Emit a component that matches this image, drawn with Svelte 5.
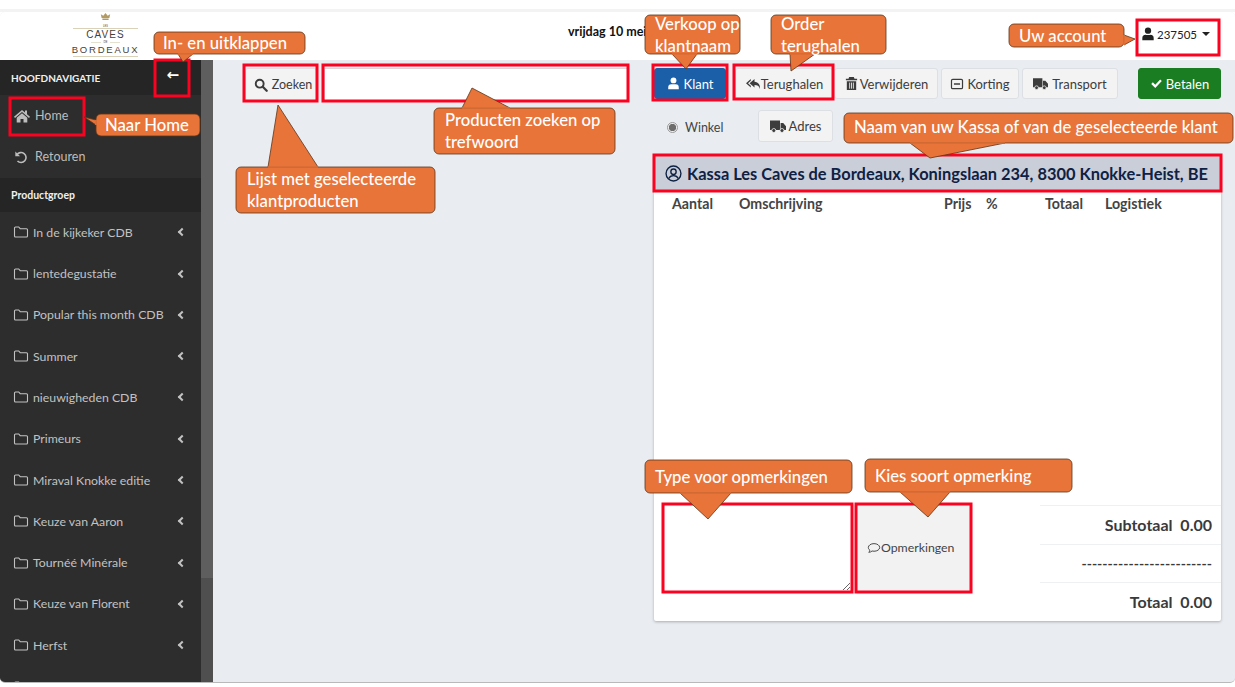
<script>
  const groups = ['In de kijkeker CDB','lentedegustatie','Popular this month CDB','Summer','nieuwigheden CDB','Primeurs','Miraval Knokke editie','Keuze van Aaron','Tournéé Minérale','Keuze van Florent','Herfst','BIO Selectie'];
  const boxes = [
    [155,60,34,36],[10,98,74,37],[244,65,73,36],[323,65,305,36],[653,65,74,35],[734,65,99,34],
    [1137,20,82,35],[654,155,567,36],[663,504,189,88],[856,504,115,88]
  ];
  const callouts = [
    { x:154,y:32,w:151,h:22, tail:'178,54 183,62 193,54', lines:[['In- en uitklappen',163,49]] },
    { x:96,y:114,w:104,h:22, tail:'96,120 84,117 96,125', lines:[['Naar Home',105,131]] },
    { x:236,y:167,w:199,h:46, tail:'268,167 278,105 318,167', lines:[['Lijst met geselecteerde',247,185],['klantproducten',247,207]] },
    { x:434,y:108,w:181,h:46, tail:'462,108 472,88 510,108', lines:[['Producten zoeken op',445,126],['trefwoord',445,148]] },
    { x:645,y:15,w:95,h:39, tail:'672,54 686,69 697,54', lines:[['Verkoop op',655,30],['klantnaam',655,52]] },
    { x:771,y:15,w:115,h:39, tail:'790,54 791,71 815,54', lines:[['Order',781,30],['terughalen',781,52]] },
    { x:1009,y:24,w:115,h:23, tail:'1124,35 1135,39 1124,45', lines:[['Uw account',1019,42]] },
    { x:844,y:113,w:389,h:30, tail:'910,143 930,158 1005,143', lines:[['Naam van uw Kassa of van de geselecteerde klant',854,133]] },
    { x:645,y:460,w:207,h:33, tail:'680,493 708,519 731,493', lines:[['Type voor opmerkingen',655,483]] },
    { x:865,y:459,w:207,h:33, tail:'900,492 928,517 950,492', lines:[['Kies soort opmerking',875,482]] }
  ];
  const actions = [
    { label:'Verwijderen', cls:'b-verw', icon:'trash' },
    { label:'Korting', cls:'b-kort', icon:'minus' },
    { label:'Transport', cls:'b-trans', icon:'truck' }
  ];
</script>

{#snippet icon(name, size)}
  <svg class="ico" width={size} height={size} viewBox="0 0 16 16" aria-hidden="true">
    {#if name === 'user'}
      <circle cx="8" cy="4.2" r="3.6" fill="currentColor"/><path d="M1.5 15v-1.8A4 4 0 0 1 5.5 9h5a4 4 0 0 1 4 4.2V15z" fill="currentColor"/>
    {:else if name === 'search'}
      <circle cx="6.5" cy="6.5" r="4.5" fill="none" stroke="currentColor" stroke-width="2.2"/><path d="M10 10l4.5 4.5" stroke="currentColor" stroke-width="2.6" stroke-linecap="round"/>
    {:else if name === 'trash'}
      <path d="M2 3h12v1.6H2zM5.5 1h5l.7 2h-6.4zM3 5.5h10V15H3z" fill="currentColor"/><path d="M6 7v6.5M8 7v6.5M10 7v6.5" stroke="#f4f4f4" stroke-width=".9"/>
    {:else if name === 'minus'}
      <rect x="1.7" y="2.7" width="12.6" height="10.6" rx="1.4" fill="none" stroke="currentColor" stroke-width="1.4"/><path d="M4.5 8h7" stroke="currentColor" stroke-width="1.6"/>
    {:else if name === 'truck'}
      <path d="M0 2.500h10v9.500H0zM10.600 5h2.600L16 8.200V12h-5.400z" fill="currentColor"/><circle cx="3.800" cy="12.500" r="2" fill="currentColor" stroke="#f4f4f4" stroke-width=".8"/><circle cx="12" cy="12.500" r="2" fill="currentColor" stroke="#f4f4f4" stroke-width=".8"/>
    {:else if name === 'reply'}
      <path d="M5.800 3L1 7.200l4.800 4.300V9.800L3 7.200l2.800-2.500z" fill="currentColor"/><path d="M9.500 3L4.600 7.200l4.900 4.300V9c3 0 4.500.9 5.500 4 .4-4-1.500-7-5.500-7.300z" fill="currentColor"/>
    {:else if name === 'check'}
      <path d="M1.500 8.500l2-2 3 3 6-6.500 2 2-8 8.500z" fill="currentColor"/>
    {:else if name === 'home'}
      <path d="M8 2L0 8.800l1 1.100L8 4l7 5.900 1-1.100-3-2.500V2.500h-2v2z" fill="currentColor"/><path d="M8 5.200l5.300 4.500V14.500H9.500V11h-3v3.500H2.700V9.700z" fill="currentColor"/>
    {:else if name === 'undo'}
      <path d="M3.300 5.500A5.700 5.700 0 1 1 4 12.600" fill="none" stroke="currentColor" stroke-width="1.800"/><path d="M1.500 1.800v5.400h5.400z" fill="currentColor"/>
    {:else if name === 'folder'}
      <path d="M1.500 4a1 1 0 0 1 1-1h3.200l1.500 1.700h6.300a1 1 0 0 1 1 1V12a1 1 0 0 1-1 1h-11a1 1 0 0 1-1-1z" fill="none" stroke="currentColor" stroke-width="1.100"/>
    {:else if name === 'comment'}
      <path d="M8 3c3.600 0 6.500 1.900 6.500 4.400S11.600 11.700 8 11.700c-.8 0-1.500-.1-2.200-.3-.9.900-2.200 1.500-3.800 1.500.7-.7 1.200-1.500 1.300-2.400-1.100-.8-1.800-1.800-1.800-3C1.500 4.900 4.400 3 8 3z" fill="none" stroke="currentColor" stroke-width="1.100"/>
    {:else if name === 'usercircle'}
      <circle cx="8" cy="8" r="7" fill="none" stroke="currentColor" stroke-width="1.300"/><circle cx="8" cy="6.300" r="2.500" fill="none" stroke="currentColor" stroke-width="1.300"/><path d="M3.600 12.800c.7-2 2.400-2.800 4.400-2.800s3.700.8 4.400 2.800" fill="none" stroke="currentColor" stroke-width="1.300"/>
    {/if}
  </svg>
{/snippet}

<div class="page">
  <div class="window">
    <header class="top">
      <div class="logo">
        <svg class="crown" width="11" height="7" viewBox="0 0 14 9"><path d="M2 6.500L1 1.500l3.200 2L7 0l2.800 3.500L13 1.500l-1 5zM3 7.200h8V9H3z" fill="#b29a63"/></svg>
        <div class="les">LES</div>
        <div class="rule"></div>
        <div class="caves">CAVES</div>
        <div class="de"><i></i><span>DE</span><i></i></div>
        <div class="bordeaux">BORDEAUX</div>
        <div class="rule end"></div>
      </div>
      <div class="date">vrijdag 10 mei 2024</div>
      <div class="account">
        {@render icon('user', 14)}<span>237505</span><span class="caret"></span>
      </div>
    </header>

    <div class="body">
      <aside class="side">
        <nav class="nav">
          <div class="nav-head"><span>HOOFDNAVIGATIE</span><span class="back">←</span></div>
          <div class="nav-item"><span class="nav-ico">{@render icon('home', 16)}</span><span>Home</span></div>
          <div class="nav-item"><span class="nav-ico">{@render icon('undo', 14)}</span><span>Retouren</span></div>
          <div class="nav-sub">Productgroep</div>
          {#each groups as g}
            <div class="grp">{@render icon('folder', 16)}<span class="grp-name">{g}</span><span class="chev"></span></div>
          {/each}
        </nav>
        <div class="scroll"><div class="thumb"></div></div>
      </aside>

      <main class="main">
        <section class="search">
          <button class="btn zoek">{@render icon('search', 14)}<span>Zoeken</span></button>
          <input class="term" type="text" />
        </section>

        <section class="order">
          <div class="toolbar">
            <button class="btn klant">{@render icon('user', 13)}<span>Klant</span></button>
            <button class="btn terug">{@render icon('reply', 16)}<span>Terughalen</span></button>
            {#each actions as a}
              <button class="btn {a.cls}">{@render icon(a.icon, a.icon === 'minus' ? 14 : 15)}<span>{a.label}</span></button>
            {/each}
            <button class="btn pay">{@render icon('check', 13)}<span>Betalen</span></button>
          </div>
          <div class="delivery">
            <label class="radio"><span class="dot"></span>Winkel</label>
            <button class="btn adres">{@render icon('truck', 16)}<span>Adres</span></button>
          </div>
          <div class="card">
            <div class="who">{@render icon('usercircle', 17)}<span>Kassa Les Caves de Bordeaux, Koningslaan 234, 8300 Knokke-Heist, BE</span></div>
            <div class="cols">
              <span class="c1">Aantal</span><span class="c2">Omschrijving</span><span class="c3">Prijs</span><span class="c4">%</span><span class="c5">Totaal</span><span class="c6">Logistiek</span>
            </div>
            <div class="lines"></div>
            <div class="foot">
              <textarea class="note"></textarea>
              <button class="kind">{@render icon('comment', 14)}<span>Opmerkingen</span></button>
              <div class="totals">
                <div class="row">Subtotaal&nbsp;&nbsp;0.00</div>
                <div class="row dashes">-------------------------</div>
                <div class="row">Totaal&nbsp;&nbsp;0.00</div>
              </div>
            </div>
          </div>
        </section>
      </main>
    </div>
  </div>

  <svg class="notes" width="1235" height="687" viewBox="0 0 1235 687">
    {#each callouts as c}
      <rect x={c.x} y={c.y} width={c.w} height={c.h} rx="5" fill="#e8743a" stroke="#5e3518" stroke-width=".8"/>
    {/each}
    {#each boxes as b}
      <rect x={b[0]} y={b[1]} width={b[2]} height={b[3]} fill="none" stroke="#fb0320" stroke-width="3"/>
    {/each}
    {#each callouts as c}
      <polygon points={c.tail} fill="#e8743a" stroke="#5e3518" stroke-width=".8"/>
      <polyline points="{c.tail.split(' ')[0]} {c.tail.split(' ')[2]}" stroke="#e8743a" stroke-width="1.6" fill="none"/>
      {#each c.lines as l}
        <text x={l[1]} y={l[2]} class="note-text">{l[0]}</text>
      {/each}
    {/each}
  </svg>
</div>

<style>
  :global(body) { margin: 0; background: #fff; }
  .page { position: relative; width: 1235px; height: 687px; overflow: hidden; font-family: "Lato", "Open Sans", sans-serif; font-size: 13px; color: #343a40; padding-top: 12px; box-sizing: border-box; }
  .page::before { content: ""; display: block; height: 3px; margin-top: -3px; background: #f3f3f3; }
  .window { height: 671px; display: flex; flex-direction: column; background: #e9edf2; border-bottom: 1px solid #b9b9b9; box-sizing: border-box; border-radius: 5px 5px 5px 5px; overflow: hidden; }
  .top { height: 48px; flex: none; background: #fff; display: flex; align-items: flex-start; position: relative; }
  .logo { width: 65px; margin-left: 73px; display: flex; flex-direction: column; align-items: center; color: #45423a; }
  .crown { margin-top: 1px; flex: none; }
  .les { font-size: 3px; line-height: 4px; margin-top: 4px; }
  .rule { width: 100%; height: 1px; flex: none; background: #d9d2b8; }
  .rule.end { margin-top: 1px; }
  .caves { font: 10px/12px "Liberation Sans", sans-serif; letter-spacing: 1.100px; }
  .de { width: 100%; display: flex; align-items: center; justify-content: center; gap: 2px; font-size: 3px; line-height: 3px; }
  .de i { width: 10px; height: 1px; background: #e6e1cf; }
  .bordeaux { font: 9.500px/11px "Liberation Sans", sans-serif; letter-spacing: 1.800px; white-space: nowrap; }
  .date { position: absolute; left: 568px; top: 12px; font-size: 12.500px; font-weight: 700; color: #111; }
  .account { position: absolute; left: 1141px; top: 15px; display: flex; align-items: center; gap: 2px; color: #222; font-size: 11.500px; }
  .caret { width: 0; height: 0; border: 4px solid transparent; border-top-color: #222; border-bottom: 0; margin-left: 3px; }
  .ico { flex: none; display: block; }

  .body { flex: 1; display: flex; min-height: 0; }
  .side { width: 213px; flex: none; display: flex; background: #2d2d2d; }
  .nav { width: 201px; flex: none; overflow: hidden; color: #c2c7d0; }
  .nav-head { height: 35px; background: #252525; color: #f0f0f0; display: flex; align-items: center; justify-content: space-between; padding: 0 22px 0 11px; font-size: 10px; font-weight: 700; }
  .back { font-size: 15px; color: #fff; font-weight: 700; font-family: "DejaVu Sans", sans-serif; margin-top: -5px; }
  .nav-item { height: 41.300px; display: flex; align-items: center; padding-left: 14px; font-size: 12.500px; color: #bdbdbd; }
  .nav-ico { width: 21px; flex: none; display: flex; }
  .nav-sub { height: 34px; background: #252525; color: #f0f0f0; display: flex; align-items: center; padding-left: 11px; font-size: 10.500px; font-weight: 700; }
  .grp { height: 41.300px; display: flex; align-items: center; padding-left: 13px; gap: 4px; color: #c2c2c2; font-size: 12.300px; }
  .grp-name { flex: 1; white-space: nowrap; }
  .chev { width: 6px; height: 6px; border-left: 2px solid #c2c2c2; border-bottom: 2px solid #c2c2c2; transform: rotate(45deg); margin-right: 16px; box-sizing: border-box; }
  .scroll { width: 12px; background: #4f4f4f; }
  .thumb { height: 518px; background: #5e5e5e; }

  .main { flex: 1; display: flex; min-width: 0; padding: 8px 14px 0 32px; gap: 26px; }
  .search { display: flex; gap: 7px; width: 383px; flex: none; height: 33px; }
  .btn { display: inline-flex; align-items: center; justify-content: center; gap: 3px; height: 31px; box-sizing: border-box; background: #f3f3f3; border: 1px solid #dcdfe3; border-radius: 3px; padding: 0; color: #3c3c3c; font: inherit; }
  .zoek { width: 72px; height: 33px; gap: 4px; padding-left: 4px; font-size: 12.500px; }
  .term { width: 304px; height: 33px; box-sizing: border-box; background: #fff; border: 1px solid #d5d9de; }

  .order { flex: 1; min-width: 0; display: flex; flex-direction: column; }
  .toolbar { display: flex; gap: 3px; align-items: center; }
  .klant { width: 72px; background: #1a5fa8; border-color: #1a5fa8; color: #fff; gap: 4px; }
  .terug { width: 98px; margin-left: 6px; gap: 0; }
  .b-verw { width: 104px; margin-left: -2px; gap: 1px; }
  .b-kort { width: 78px; }
  .b-trans { width: 96px; gap: 4px; }
  .pay { width: 83px; margin-left: auto; background: #1a7d22; border-color: #1a7d22; color: #fff; }
  .delivery { display: flex; align-items: center; margin-top: 11px; height: 31px; }
  .radio { display: flex; align-items: center; gap: 7px; margin-left: 13px; width: 91px; color: #444; margin-top: 4px; font-size: 12.500px; }
  .dot { width: 11px; height: 11px; box-sizing: border-box; border-radius: 50%; border: 1px solid #9a9a9a; background: radial-gradient(circle, #6d6d6d 0 3.400px, #eee 3.900px); }
  .adres { width: 75px; gap: 3px; height: 32px; }

  .card { margin-top: 14px; height: 466px; background: #fff; box-shadow: 0 1px 3px rgba(0,0,0,.28); display: flex; flex-direction: column; border-radius: 2px; }
  .who { height: 36px; flex: none; background: #c9ced9; color: #0f2143; display: flex; align-items: center; gap: 5px; padding-left: 11px; font-size: 16.400px; font-weight: 700; white-space: nowrap; }
  .cols { display: flex; height: 24px; flex: none; align-items: center; font-weight: 700; font-size: 14.200px; color: #444; white-space: nowrap; }
  .c1 { margin-left: 18px; width: 67px; }
  .c2 { width: 205px; }
  .c3 { width: 42px; }
  .c4 { width: 59px; }
  .c5 { width: 60px; }
  .lines { flex: 1; }
  .foot { height: 117px; flex: none; display: flex; align-items: flex-start; }
  .note { width: 188px; height: 87px; box-sizing: border-box; margin: 0 0 0 9px; border: 0; background: #fff; }
  .kind { width: 115px; height: 87px; margin-left: 5px; box-sizing: border-box; background: #f2f2f2; border: 0; display: flex; align-items: center; justify-content: flex-start; color: #444; font: inherit; font-size: 12.300px; padding: 0 0 0 11px; }
  .totals { width: 181px; margin-left: 69px; margin-top: 1px; }
  .row { height: 38.500px; box-sizing: border-box; border-top: 1px solid #eef0f2; display: flex; align-items: center; justify-content: flex-end; padding-right: 9px; font-weight: 700; font-size: 16px; color: #3a3a3a; white-space: nowrap; }
  .row.dashes { font-size: 14px; }

  .notes { position: absolute; left: 0; top: 0; pointer-events: none; }
  .note-text { fill: #fff; font-family: "Lato", sans-serif; font-size: 16.700px; font-weight: 500; }
</style>
